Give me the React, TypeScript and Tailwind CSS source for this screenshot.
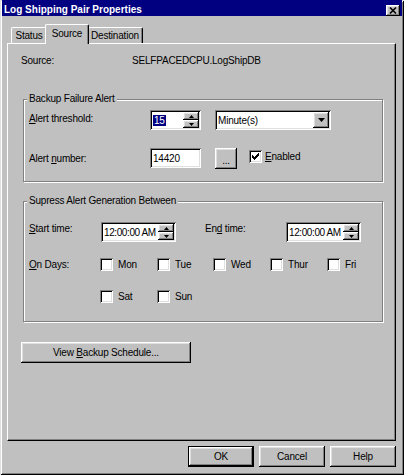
import React from "react";

const raised =
  "bg-[#c0c0c0] shadow-[inset_-1px_-1px_0_#000000,inset_1px_1px_0_#ffffff,inset_-2px_-2px_0_#808080,inset_2px_2px_0_#dfdfdf]";
const sunken =
  "bg-white shadow-[inset_1px_1px_0_#808080,inset_-1px_-1px_0_#ffffff,inset_2px_2px_0_#000000,inset_-2px_-2px_0_#dfdfdf]";

function U({ children }: { children: React.ReactNode }) {
  return <span className="underline underline-offset-[1px] decoration-1">{children}</span>;
}

function SpinButtons() {
  return (
    <div className="flex flex-col w-[16px] h-[16px] shrink-0">
      <div className={`${raised} h-[8px] flex items-center justify-center`}>
        <svg width="5" height="3" viewBox="0 0 5 3">
          <polygon points="2.5,0 5,3 0,3" fill="#000" />
        </svg>
      </div>
      <div className={`${raised} h-[8px] flex items-center justify-center`}>
        <svg width="5" height="3" viewBox="0 0 5 3">
          <polygon points="0,0 5,0 2.5,3" fill="#000" />
        </svg>
      </div>
    </div>
  );
}

function Check({ checked }: { checked?: boolean }) {
  return (
    <div className={`${sunken} w-[13px] h-[13px] shrink-0 flex items-center justify-center`}>
      {checked && (
        <svg width="7" height="7" viewBox="0 0 7 7" shapeRendering="crispEdges">
          <rect x="6" y="0" width="1" height="3" fill="#000" />
          <rect x="5" y="1" width="1" height="3" fill="#000" />
          <rect x="4" y="2" width="1" height="3" fill="#000" />
          <rect x="3" y="3" width="1" height="3" fill="#000" />
          <rect x="2" y="4" width="1" height="3" fill="#000" />
          <rect x="1" y="3" width="1" height="3" fill="#000" />
          <rect x="0" y="2" width="1" height="3" fill="#000" />
        </svg>
      )}
    </div>
  );
}

function Group({
  title,
  className,
  children,
}: {
  title: string;
  className: string;
  children: React.ReactNode;
}) {
  return (
    <div
      className={`relative border border-[#808080] shadow-[inset_1px_1px_0_#ffffff,1px_1px_0_#ffffff] ${className}`}
    >
      <div className="absolute left-[3px] top-[-8px] px-[2px] bg-[#c0c0c0] leading-[13px] whitespace-nowrap">
        {title}
      </div>
      {children}
    </div>
  );
}

function TimeBox() {
  return (
    <div className={`${sunken} w-[75px] h-[20px] p-[2px] flex items-center shrink-0`}>
      <div className="flex-1 pl-[1px] leading-[13px] tracking-[-0.4px] whitespace-nowrap overflow-hidden">
        12:00:00 AM
      </div>
      <SpinButtons />
    </div>
  );
}

function Day({ label, w }: { label: string; w: string }) {
  return (
    <div className={`flex items-center ${w}`}>
      <Check />
      <span className="ml-[5px] leading-[13px]">{label}</span>
    </div>
  );
}

function Btn({ children, def }: { children: React.ReactNode; def?: boolean }) {
  if (def) {
    return (
      <div className="w-[66px] h-[21px] border border-black">
        <div className={`${raised} w-full h-full flex items-center justify-center leading-[13px]`}>
          <span>{children}</span>
        </div>
      </div>
    );
  }
  return (
    <div className={`${raised} w-[66px] h-[21px] flex items-center justify-center leading-[13px]`}>
      <span>{children}</span>
    </div>
  );
}

export default function App() {
  return (
    <div className="w-[404px] h-[475px] overflow-hidden bg-[#c0c0c0] text-black text-[10px] tracking-[-0.2px] leading-[13px] font-['Liberation_Sans',Arial,sans-serif] shadow-[inset_1px_1px_0_#dfdfdf,inset_-1px_-1px_0_#000000,inset_2px_2px_0_#ffffff,inset_-2px_-2px_0_#808080] flex flex-col">
      {/* Title bar */}
      <div className="mx-[2px] h-[16px] bg-[#000080] flex justify-between">
        <div className="pl-[2px] pt-[4px] text-white font-bold text-[10px] tracking-normal leading-[12px] whitespace-nowrap">
          Log Shipping Pair Properties
        </div>
        <div className={`${raised} self-end w-[14px] h-[11px] mr-[2px] flex items-center justify-center`}>
          <svg width="8" height="7" viewBox="0 0 8 7">
            <path d="M1 0.5 L7 6.5 M7 0.5 L1 6.5" stroke="#000" strokeWidth="1.6" />
          </svg>
        </div>
      </div>

      {/* Tabs */}
      <div className="mt-[8px] ml-[11px] h-[19px] flex items-end">
        <div className="relative w-[36px] h-[16px] border-t border-l border-white border-r border-r-black rounded-t-[2px] shadow-[inset_-1px_0_0_#808080] flex items-center justify-center">
          <span>Status</span>
        </div>
        <div className="relative z-10 -mx-[2px] -mb-[1px] w-[44px] h-[20px] bg-[#c0c0c0] border-t border-l border-white border-r border-r-black rounded-t-[2px] shadow-[inset_-1px_0_0_#808080] flex items-start justify-center pt-[2px]">
          <span>Source</span>
        </div>
        <div className="relative w-[56px] h-[16px] border-t border-l border-white border-r border-r-black rounded-t-[2px] shadow-[inset_-1px_0_0_#808080] flex items-center justify-center">
          <span>Destination</span>
        </div>
      </div>

      {/* Panel */}
      <div className="ml-[7px] w-[389px] h-[398px] border-t border-l border-white border-r border-b border-r-black border-b-black shadow-[inset_-1px_-1px_0_#808080] flex flex-col items-start">
        <div className="pt-[10px] pl-[13px] flex">
          <div className="w-[111px]">Source:</div>
          <div>SELFPACEDCPU.LogShipDB</div>
        </div>

        <Group title="Backup Failure Alert" className="mt-[32px] ml-[15px] w-[360px] h-[83px]">
          <div className="pl-[5px] pt-[10px] flex items-start">
            <div className="w-[121px] mt-[2px]">
              <U>A</U>lert threshold:
            </div>
            <div className={`${sunken} w-[51px] h-[20px] p-[2px] flex items-center shrink-0`}>
              <div className="flex-1 pl-[1px]">
                <span className="bg-[#000080] text-white px-[1px]">15</span>
              </div>
              <SpinButtons />
            </div>
            <div className={`${sunken} ml-[14px] w-[116px] h-[20px] p-[2px] flex items-center`}>
              <div className="flex-1 pl-[1px]">Minute(s)</div>
              <div className={`${raised} w-[16px] h-[16px] flex items-center justify-center`}>
                <svg width="7" height="4" viewBox="0 0 7 4">
                  <polygon points="0,0 7,0 3.5,4" fill="#000" />
                </svg>
              </div>
            </div>
          </div>
          <div className="pl-[5px] mt-[18px] flex items-start">
            <div className="w-[121px] mt-[4px]">
              Alert <U>n</U>umber:
            </div>
            <div className={`${sunken} w-[51px] h-[20px] px-[3px] flex items-center shrink-0`}>
              <span>14420</span>
            </div>
            <div className={`${raised} ml-[14px] w-[22px] h-[21px] flex items-end justify-center pb-[3px] leading-[10px]`}>
              <span>...</span>
            </div>
            <div className="ml-[12px] mt-[2px] flex items-center">
              <Check checked />
              <span className="ml-[3px]">
                <U>E</U>nabled
              </span>
            </div>
          </div>
        </Group>

        <Group
          title="Supress Alert Generation Between"
          className="mt-[19px] ml-[15px] w-[360px] h-[121px]"
        >
          <div className="pl-[5px] pt-[20px] flex items-start">
            <div className="w-[72px]">
              <U>S</U>tart time:
            </div>
            <TimeBox />
            <div className="ml-[29px] w-[81px]">
              En<U>d</U> time:
            </div>
            <TimeBox />
          </div>
          <div className="pl-[5px] mt-[16px] flex items-center h-[13px]">
            <div className="w-[71px]">
              <U>O</U>n Days:
            </div>
            <Day label="Mon" w="w-[57px]" />
            <Day label="Tue" w="w-[56px]" />
            <Day label="Wed" w="w-[57px]" />
            <Day label="Thur" w="w-[57px]" />
            <Day label="Fri" w="w-[50px]" />
          </div>
          <div className="pl-[5px] mt-[19px] flex items-center h-[13px]">
            <div className="w-[71px]" />
            <Day label="Sat" w="w-[57px]" />
            <Day label="Sun" w="w-[56px]" />
          </div>
        </Group>

        <div className={`${raised} mt-[20px] ml-[13px] w-[170px] h-[21px] flex items-center justify-center`}>
          <span>
            View <U>B</U>ackup Schedule...
          </span>
        </div>
      </div>

      {/* Buttons */}
      <div className="mt-[5px] ml-[7px] w-[389px] flex justify-end gap-[5px]">
        <Btn def>OK</Btn>
        <Btn>Cancel</Btn>
        <Btn>Help</Btn>
      </div>
    </div>
  );
}
